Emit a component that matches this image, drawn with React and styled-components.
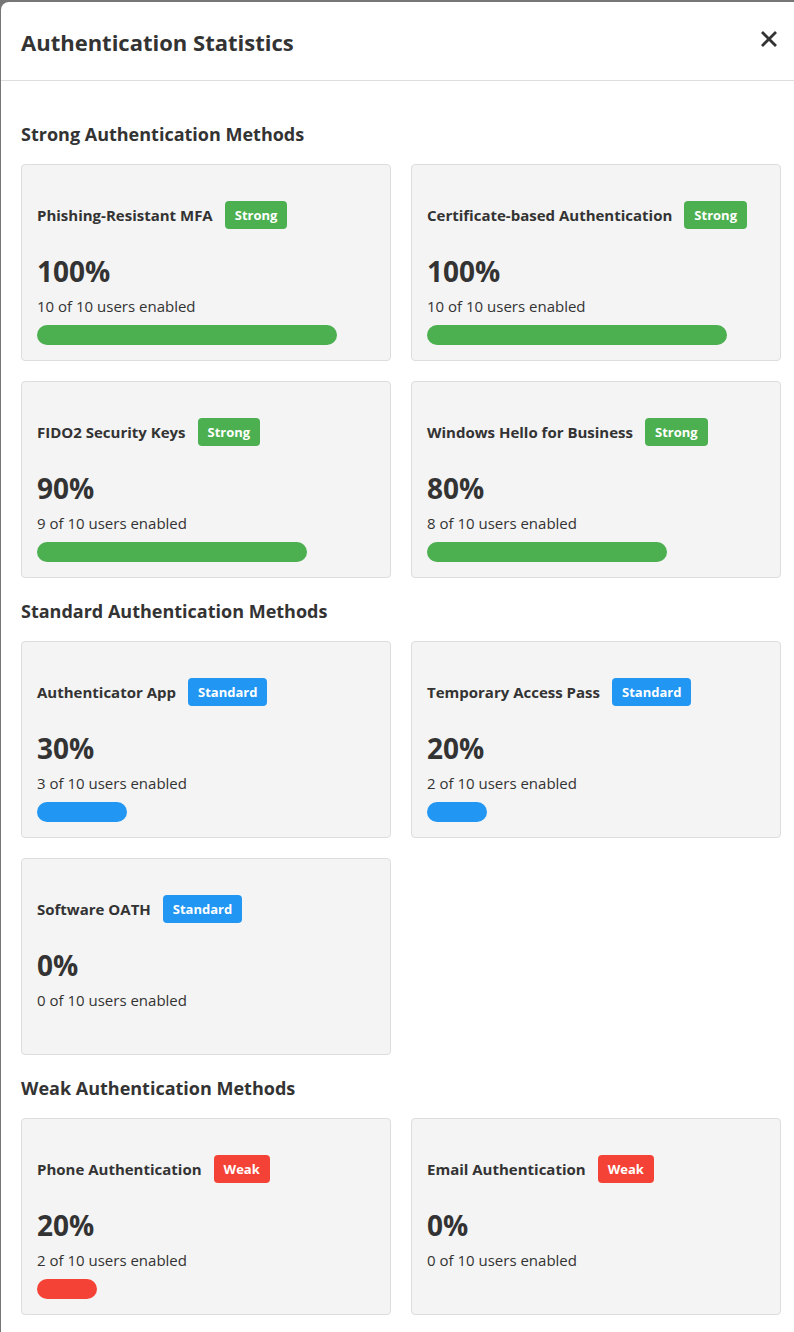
import React from "react";
import styled, { createGlobalStyle } from "styled-components";

const GlobalStyle = createGlobalStyle`
  html, body {
    margin: 0;
    padding: 0;
    overflow: hidden;
    background: #767676;
  }
  body {
    font-family: "Open Sans", "Noto Sans", "Liberation Sans", sans-serif;
    color: #333;
  }
  * {
    box-sizing: border-box;
  }
`;

const COLORS = {
  Strong: "#4caf50",
  Standard: "#2196f3",
  Weak: "#f44336",
};

const Overlay = styled.div`
  padding: 2px 0 0 1px;
  min-height: 100vh;
`;

const Modal = styled.div`
  width: 800px;
  background: #fff;
  border-top-left-radius: 8px;
  min-height: 1330px;
`;

const Header = styled.div`
  height: 79px;
  display: flex;
  align-items: center;
  justify-content: space-between;
  padding: 2px 20px 0 20px;
  border-bottom: 1px solid #dedede;
`;

const Title = styled.h2`
  margin: 0;
  font-size: 22px;
  font-weight: 700;
  line-height: 30px;
  color: #333;
`;

const CloseButton = styled.button`
  border: none;
  background: none;
  padding: 4px;
  margin: 0 -1px 6px 0;
  cursor: pointer;
  display: flex;
  color: #333;
`;

const Body = styled.div`
  padding: 40px 20px 20px;
`;

const Section = styled.section`
  & + & {
    margin-top: 20px;
  }
`;

const SectionHeading = styled.h3`
  margin: 0 0 17px;
  font-size: 18px;
  line-height: 26px;
  font-weight: 700;
  color: #333;
`;

const Grid = styled.div`
  display: grid;
  grid-template-columns: 370px 370px;
  gap: 20px;
`;

const Card = styled.div`
  background: #f4f4f4;
  border: 1px solid #dddddd;
  border-radius: 4px;
  padding: 15px;
`;

const CardTitle = styled.h4`
  display: flex;
  align-items: center;
  gap: 12px;
  height: 28px;
  margin: 21px 0 24px;
  font-size: 15px;
  font-weight: 700;
  color: #333;
`;

const Badge = styled.span`
  display: inline-flex;
  align-items: center;
  height: 28px;
  padding: 0 10px;
  border-radius: 4px;
  background: ${(p) => COLORS[p.$level]};
  color: #fff;
  font-size: 13px;
  font-weight: 700;
`;

const Percent = styled.div`
  font-size: 28px;
  line-height: 37px;
  font-weight: 700;
  color: #333;
`;

const Enabled = styled.div`
  margin-top: 6px;
  font-size: 15px;
  line-height: 20px;
  color: #333;
`;

const BarTrack = styled.div`
  margin-top: 9px;
  width: 300px;
  height: 20px;
`;

const BarFill = styled.div`
  height: 100%;
  border-radius: 10px;
  background: ${(p) => COLORS[p.$level]};
`;

const TOTAL = 10;

const sections = [
  {
    title: "Strong Authentication Methods",
    level: "Strong",
    methods: [
      { name: "Phishing-Resistant MFA", count: 10 },
      { name: "Certificate-based Authentication", count: 10 },
      { name: "FIDO2 Security Keys", count: 9 },
      { name: "Windows Hello for Business", count: 8 },
    ],
  },
  {
    title: "Standard Authentication Methods",
    level: "Standard",
    methods: [
      { name: "Authenticator App", count: 3 },
      { name: "Temporary Access Pass", count: 2 },
      { name: "Software OATH", count: 0 },
    ],
  },
  {
    title: "Weak Authentication Methods",
    level: "Weak",
    methods: [
      { name: "Phone Authentication", count: 2 },
      { name: "Email Authentication", count: 0 },
    ],
  },
];

function MethodCard({ name, count, level }) {
  const pct = Math.round((count / TOTAL) * 100);
  return (
    <Card>
      <CardTitle>
        {name}
        <Badge $level={level}>{level}</Badge>
      </CardTitle>
      <Percent>{pct}%</Percent>
      <Enabled>
        {count} of {TOTAL} users enabled
      </Enabled>
      <BarTrack>
        {pct > 0 && <BarFill $level={level} style={{ width: `${pct}%` }} />}
      </BarTrack>
    </Card>
  );
}

export default function App() {
  return (
    <Overlay>
      <GlobalStyle />
      <Modal>
        <Header>
          <Title>Authentication Statistics</Title>
          <CloseButton aria-label="Close">
            <svg width="18" height="18" viewBox="0 0 18 18">
              <path
                d="M2 2 L16 16 M16 2 L2 16"
                stroke="currentColor"
                strokeWidth="2.8"
                strokeLinecap="butt"
              />
            </svg>
          </CloseButton>
        </Header>
        <Body>
          {sections.map((s) => (
            <Section key={s.title}>
              <SectionHeading>{s.title}</SectionHeading>
              <Grid>
                {s.methods.map((m) => (
                  <MethodCard key={m.name} {...m} level={s.level} />
                ))}
              </Grid>
            </Section>
          ))}
        </Body>
      </Modal>
    </Overlay>
  );
}
